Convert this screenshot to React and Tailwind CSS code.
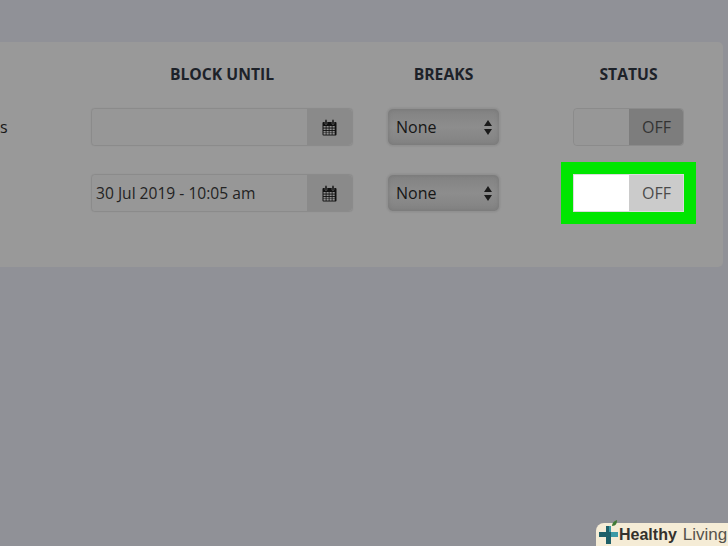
import React from 'react';

const CalendarIcon = () => (
  <svg width="15" height="17" viewBox="0 0 15 17" className="block">
    <rect x="0.5" y="3" width="14" height="13.5" rx="1" fill="#111" />
    <rect x="3" y="0.5" width="2" height="5" rx="1" fill="#111" stroke="#8a8a8a" strokeWidth="0.5" />
    <rect x="10" y="0.5" width="2" height="5" rx="1" fill="#111" stroke="#8a8a8a" strokeWidth="0.5" />
    <g fill="#8f8f8f">
      {[1.5, 4.5, 7.5, 10.5].map((x) =>
        [7, 9.5, 12, 14].map((y) => <rect key={`${x}-${y}`} x={x} y={y} width="2.2" height="1.6" />)
      )}
    </g>
  </svg>
);

const SortIcon = () => (
  <svg width="8" height="15" viewBox="0 0 8 15" className="block">
    <path d="M4 0 L8 6 L0 6 Z M0 9 L8 9 L4 15 Z" fill="#1b1b1b" />
  </svg>
);

const DateField = ({ value }) => (
  <div className="flex h-[38px] w-[262px] rounded-[4px] border border-[#8b8b8b] shadow-[0_0_1px_#888]">
    <div className="flex flex-1 items-center rounded-l-[4px] bg-[#979797] pt-px pl-1 text-[15.6px] text-[#232323]">{value}</div>
    <div className="flex w-[45px] items-center justify-center rounded-r-[4px] bg-[#8a8a8a]">
      <CalendarIcon />
    </div>
  </div>
);

const BreakSelect = () => (
  <div className="flex h-[38px] w-[113px] items-center justify-between rounded-[6px] border border-[#909090] bg-[linear-gradient(#828282,#8d8d8d_50%,#828282)] pl-2 pr-[7px] text-[16px] text-[#161616] shadow-[inset_0_0_4px_#767676,0_0_2px_#858585]">
    None
    <SortIcon />
  </div>
);

const Toggle = ({ highlighted }) => (
  <div
    className={
      highlighted
        ? 'flex h-[38px] w-[111px] border border-[#dcdcdc] outline-[12px] outline-[#00e600]'
        : 'flex h-[38px] w-[111px] rounded-[4px] border border-[#8b8b8b]'
    }
  >
    <div className={highlighted ? 'w-[55px] bg-white' : 'w-[55px] rounded-l-[4px] bg-[#979797]'} />
    <div
      className={
        highlighted
          ? 'flex flex-1 items-center justify-end bg-[#cbcbcb] pr-3 text-[16px] text-[#4b4b4b]'
          : 'flex flex-1 items-center justify-end rounded-r-[4px] bg-[#7d7d7d] pr-3 text-[16px] text-[#343434]'
      }
    >
      OFF
    </div>
  </div>
);

export default function App() {
  return (
    <div className="relative h-[546px] w-[728px] overflow-hidden bg-[#909197] pt-[42px] font-['Open_Sans',sans-serif]">
      {/* Table panel */}
      <div className="h-[225px] w-[723px] rounded-r-[5px] bg-[#999999] pt-[21px]">
        <div className="grid grid-cols-[91px_296px_186px_150px] items-center">
          <div />
          <div className="w-[262px] text-center text-[15.7px] leading-[22px] font-bold text-[#1d2229]">BLOCK UNTIL</div>
          <div className="w-[113px] text-center text-[15.7px] leading-[22px] font-bold text-[#1d2229]">BREAKS</div>
          <div className="w-[111px] text-center text-[15.7px] leading-[22px] font-bold text-[#1d2229]">STATUS</div>
        </div>

        <div className="mt-[23px] grid grid-cols-[91px_296px_186px_150px] items-center">
          <div className="text-[16px] text-[#161616]">s</div>
          <DateField value="" />
          <BreakSelect />
          <Toggle />
        </div>

        <div className="mt-7 grid grid-cols-[91px_296px_186px_150px] items-center">
          <div />
          <DateField value="30 Jul 2019 - 10:05 am" />
          <BreakSelect />
          <Toggle highlighted />
        </div>
      </div>

      {/* Watermark */}
      <div className="absolute right-0 bottom-0 flex h-[23px] w-[132px] items-center rounded-tl-[8px] bg-[#f5ecd6] pl-[3px] font-['Liberation_Sans',sans-serif] leading-none whitespace-nowrap">
        <svg width="20" height="24" viewBox="0 0 20 24" className="mb-[2px] shrink-0 overflow-visible">
          <path d="M7 4h5v6h7v5h-7v7H7v-7H0v-5h7z" fill="#1f6068" />
          <path d="M10 10h2v-6h-2zM12 10h7v5h-7z" fill="#3b9aa6" />
          <path d="M13 4c0-3 2-5 5-6 0 3-1 6-5 6z" fill="#3f7a35" />
        </svg>
        <span className="text-[16px] font-bold text-[#33312c]">Healthy</span>
        <span className="ml-[6px] text-[17px] text-[#55534d]">Living</span>
      </div>
    </div>
  );
}
